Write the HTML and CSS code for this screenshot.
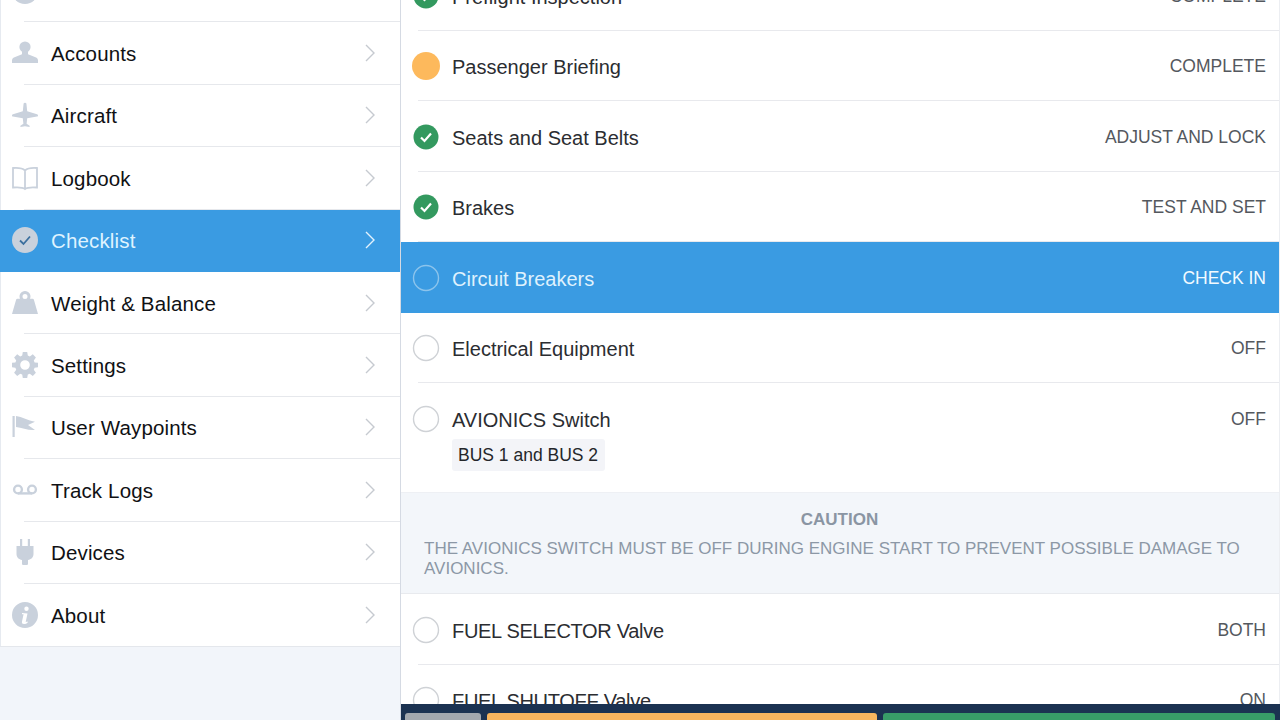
FILE: index.html
```html
<!DOCTYPE html>
<html lang="en">
<head>
<meta charset="utf-8">
<title>Checklist</title>
<link rel="stylesheet" href="styles.css">
</head>
<body>
<div class="app">
  <nav class="sidebar">
    <ul class="menu">
      <li class="menu-row">
        <svg class="menu-icon" viewBox="0 0 26 26"><circle cx="13" cy="13" r="13"/></svg>
      </li>
      <li class="menu-row">
        <svg class="menu-icon" viewBox="0 0 26 26"><circle cx="13" cy="7" r="5.6"/><path d="M10 11h6v3.2l7.5 3c1.6.7 2.5 1.7 2.5 3.3V23H0v-2.5c0-1.6.9-2.6 2.500-3.300l7.500-3z"/></svg>
        <span class="menu-label">Accounts</span>
        <svg class="chevron" viewBox="0 0 10 18"><path d="M1 1l8 8-8 8"/></svg>
      </li>
      <li class="menu-row">
        <svg class="menu-icon" viewBox="0 0 26 26"><path d="M11.600 1.500c.4-1 2.400-1 2.800 0l.8 7.800L25 12.200c.8.300 1 .7 1 1.300s-.2.900-1 1.100l-9.800 1.600-.6 5.500 3 2v1.300l-4.600-.8-4.600.8v-1.300l3-2-.6-5.500L.9 14.600c-.7-.2-.9-.5-.9-1.100s.2-1 1-1.300l9.800-2.900z"/></svg>
        <span class="menu-label">Aircraft</span>
        <svg class="chevron" viewBox="0 0 10 18"><path d="M1 1l8 8-8 8"/></svg>
      </li>
      <li class="menu-row">
        <svg class="menu-icon icon-outline" viewBox="0 0 26 26"><path d="M13 5.500C11 3.600 6 2.600 1 3v19.500c5-.4 10 0 12 1.500 2-1.500 7-1.900 12-1.500V3c-5-.4-10 .6-12 2.500zM13 5.500V24"/></svg>
        <span class="menu-label">Logbook</span>
        <svg class="chevron" viewBox="0 0 10 18"><path d="M1 1l8 8-8 8"/></svg>
      </li>
      <li class="menu-row is-active">
        <svg class="menu-icon" viewBox="0 0 26 26"><circle cx="13" cy="13" r="13"/><path class="inner-check" d="M8 13.500l3.500 3.500L18 9.500"/></svg>
        <span class="menu-label">Checklist</span>
        <svg class="chevron" viewBox="0 0 10 18"><path d="M1 1l8 8-8 8"/></svg>
      </li>
      <li class="menu-row">
        <svg class="menu-icon" viewBox="0 0 26 26"><path fill-rule="evenodd" d="M13 1a5.500 5.500 0 0 1 5 7.800h2.600c.7 0 1.100.3 1.300 1L26 24H0L4.100 9.800c.2-.7.600-1 1.300-1H8A5.500 5.500 0 0 1 13 1zm0 3a2.500 2.500 0 1 0 0 5 2.500 2.500 0 0 0 0-5z"/></svg>
        <span class="menu-label">Weight &amp; Balance</span>
        <svg class="chevron" viewBox="0 0 10 18"><path d="M1 1l8 8-8 8"/></svg>
      </li>
      <li class="menu-row">
        <svg class="menu-icon" viewBox="0 0 26 26"><path fill-rule="evenodd" d="M10.800 0h4.400l.6 3.600 2 .8 3-2.100 3.100 3.100-2.100 3 .8 2 3.400.4v4.400l-3.400.6-.8 2 2.100 3-3.100 3.100-3-2.100-2 .8-.6 3.400h-4.400l-.6-3.400-2-.8-3 2.100-3.100-3.100 2.100-3-.8-2L0 15.200v-4.400l3.400-.4.800-2-2.100-3 3.100-3.100 3 2.100 2-.8zM13 8.200a4.800 4.800 0 1 0 0 9.600 4.800 4.800 0 0 0 0-9.600z"/></svg>
        <span class="menu-label">Settings</span>
        <svg class="chevron" viewBox="0 0 10 18"><path d="M1 1l8 8-8 8"/></svg>
      </li>
      <li class="menu-row">
        <svg class="menu-icon" viewBox="0 0 26 26"><path d="M.5 2h2.200v21H.5zM4 2c6 .8 12 4.500 19 5.700L16 11l7 5c-7 .6-13-2.400-19-3z"/></svg>
        <span class="menu-label">User Waypoints</span>
        <svg class="chevron" viewBox="0 0 10 18"><path d="M1 1l8 8-8 8"/></svg>
      </li>
      <li class="menu-row">
        <svg class="menu-icon icon-outline icon-thick" viewBox="0 0 26 26"><circle cx="6" cy="12.500" r="3.900"/><circle cx="20" cy="12.500" r="3.900"/><path d="M6 16.400h14"/></svg>
        <span class="menu-label">Track Logs</span>
        <svg class="chevron" viewBox="0 0 10 18"><path d="M1 1l8 8-8 8"/></svg>
      </li>
      <li class="menu-row">
        <svg class="menu-icon" viewBox="0 0 26 26"><path d="M8 0h2.200v7H15.800V0H18v7h3.500v8c0 3.500-2.500 5.500-5.500 6v3.500c0 1-.6 1.500-1.500 1.500h-3c-.9 0-1.500-.5-1.500-1.500V21c-3-.5-5.500-2.500-5.500-6V7H8z"/></svg>
        <span class="menu-label">Devices</span>
        <svg class="chevron" viewBox="0 0 10 18"><path d="M1 1l8 8-8 8"/></svg>
      </li>
      <li class="menu-row">
        <svg class="menu-icon" viewBox="0 0 26 26"><path fill-rule="evenodd" d="M13 0a13 13 0 1 1 0 26 13 13 0 0 1 0-26zm1.500 4.500a2.200 2.200 0 1 0 0 4.400 2.200 2.200 0 0 0 0-4.400zM10 11v1.300h1.600L10 19.500c-.4 1.800.5 2.500 2 2.500 1.400 0 2.700-.5 3.700-1.500v-1.100l-2 .6 1.800-8.500z"/></svg>
        <span class="menu-label">About</span>
        <svg class="chevron" viewBox="0 0 10 18"><path d="M1 1l8 8-8 8"/></svg>
      </li>
    </ul>
  </nav>
  <main class="main">
    <div class="list">
      <div class="item">
        <svg class="status" viewBox="0 0 26 26"><circle class="done" cx="13" cy="13" r="12.500"/><path class="tick" d="M8 13.500l3.500 3.500L18 9.500"/></svg>
        <span class="item-label">Preflight Inspection</span>
        <span class="item-value">COMPLETE</span>
      </div>
      <div class="item">
        <svg class="status" viewBox="0 0 26 26"><circle class="current" cx="13" cy="13" r="14"/></svg>
        <span class="item-label">Passenger Briefing</span>
        <span class="item-value">COMPLETE</span>
      </div>
      <div class="item">
        <svg class="status" viewBox="0 0 26 26"><circle class="done" cx="13" cy="13" r="12.500"/><path class="tick" d="M8 13.500l3.500 3.500L18 9.500"/></svg>
        <span class="item-label">Seats and Seat Belts</span>
        <span class="item-value">ADJUST AND LOCK</span>
      </div>
      <div class="item">
        <svg class="status" viewBox="0 0 26 26"><circle class="done" cx="13" cy="13" r="12.500"/><path class="tick" d="M8 13.500l3.500 3.500L18 9.500"/></svg>
        <span class="item-label">Brakes</span>
        <span class="item-value">TEST AND SET</span>
      </div>
      <div class="item is-selected">
        <svg class="status" viewBox="0 0 26 26"><circle class="empty" cx="13" cy="13" r="12.500"/></svg>
        <span class="item-label">Circuit Breakers</span>
        <span class="item-value">CHECK IN</span>
      </div>
      <div class="item">
        <svg class="status" viewBox="0 0 26 26"><circle class="empty" cx="13" cy="13" r="12.500"/></svg>
        <span class="item-label">Electrical Equipment</span>
        <span class="item-value">OFF</span>
      </div>
      <div class="item item-tall">
        <svg class="status" viewBox="0 0 26 26"><circle class="empty" cx="13" cy="13" r="12.500"/></svg>
        <div class="item-stack">
          <span class="item-label">AVIONICS Switch</span>
          <span class="chip">BUS 1 and BUS 2</span>
        </div>
        <span class="item-value">OFF</span>
      </div>
      <section class="caution">
        <h2 class="caution-title">CAUTION</h2>
        <p class="caution-text">THE AVIONICS SWITCH MUST BE OFF DURING ENGINE START TO PREVENT POSSIBLE DAMAGE TO AVIONICS.</p>
      </section>
      <div class="item">
        <svg class="status" viewBox="0 0 26 26"><circle class="empty" cx="13" cy="13" r="12.500"/></svg>
        <span class="item-label label-caps">FUEL SELECTOR Valve</span>
        <span class="item-value">BOTH</span>
      </div>
      <div class="item">
        <svg class="status" viewBox="0 0 26 26"><circle class="empty" cx="13" cy="13" r="12.500"/></svg>
        <span class="item-label label-caps">FUEL SHUTOFF Valve</span>
        <span class="item-value">ON</span>
      </div>
    </div>
    <div class="actions">
      <div class="btn btn-gray"></div>
      <div class="btn btn-orange"></div>
      <div class="btn btn-green"></div>
    </div>
  </main>
</div>
</body>
</html>
```

FILE: styles.css
```css
* { box-sizing: border-box; }
html, body { margin: 0; height: 100%; overflow: hidden; }
body { font-family: "Liberation Sans", Arial, sans-serif; background: #fff; }

.app { display: flex; width: 1280px; height: 720px; overflow: hidden; }

/* Sidebar */
.sidebar {
  width: 401px;
  flex: none;
  background: #f2f5fa;
  border-right: 1px solid #d5dae3;
  overflow: hidden;
}
.menu { list-style: none; margin: -40px 0 0; padding: 0; background: #fff; border-bottom: 1px solid #e4e7ec; }
.menu-row {
  display: flex;
  align-items: center;
  height: 62.4px;
  padding: 0 25px 1px 11px;
  border-left: 1px solid #e6eaf0;
  background: linear-gradient(#e6e8ec, #e6e8ec) 23px 100% / 100% 1px no-repeat;
}
.menu-row:last-child { background: none; }
.menu-icon { width: 26px; height: 26px; flex: none; fill: #c9d1dc; }
.icon-outline { fill: none; stroke: #c9d1dc; stroke-width: 1.8; }
.icon-thick { stroke-width: 2.4; }
.menu-label { margin-left: 13px; padding-top: 2px; flex: 1; font-size: 20.5px; letter-spacing: .15px; color: #101114; }
.chevron { width: 10px; height: 18px; flex: none; margin-left: auto; fill: none; stroke: #c6cad0; stroke-width: 1.4; }
.is-active { background: #3a9be2; border-left-color: #3a9be2; }
.is-active .menu-label { color: #dff3ff; }
.is-active .chevron { stroke: #e2f2fd; }
.inner-check { fill: none; stroke: #3c6f9e; stroke-width: 1.8; }

/* Checklist */
.main { flex: 1; min-width: 0; display: flex; flex-direction: column; }
.list { flex: 1; min-height: 0; overflow: hidden; background: #fff; border-right: 1px solid #eceef2; }
.item {
  display: flex;
  align-items: center;
  height: 70.5px;
  padding: 0 13px 1px 12px;
  background: linear-gradient(#e8e9ed, #e8e9ed) 17px 100% / 100% 1px no-repeat;
}
.item:first-child { margin-top: -40px; }
.status { width: 26px; height: 26px; margin-top: 2px; flex: none; overflow: visible; }
.done { fill: #33995f; }
.current { fill: #fdb95c; }
.empty { fill: none; stroke: #cfd2d6; stroke-width: 1.4; }
.tick { fill: none; stroke: #fff; stroke-width: 2.2; }
.item-label { margin-left: 13px; padding-top: 5px; font-size: 20px; color: #2b2d31; }
.label-caps { letter-spacing: -.3px; }
.item-value { margin-left: auto; padding-top: 3px; font-size: 17.5px; color: #54585e; }
.is-selected { background: #3a9be2; }
.is-selected .item-label { color: #dff1fd; }
.is-selected .item-value { color: #f2faff; }
.is-selected .empty { stroke: #8cc4ec; }
.item-tall { height: 109px; padding: 21px 13px 0 12px; align-items: flex-start; background: none; }
.item-tall .item-value { padding-top: 5px; }
.item-stack { display: flex; flex-direction: column; align-items: flex-start; }
.chip { margin: 7px 0 0 13px; padding: 0 7px 0 6px; height: 32px; line-height: 32px; font-size: 17.5px; color: #24262a; background: #f3f4f8; border-radius: 3px; }

.caution {
  height: 102px;
  padding: 17px 24px 0 23px;
  background: #f3f6fa;
  border-top: 1px solid #eef0f4;
  border-bottom: 1px solid #e8eaee;
}
.caution-title { margin: 0; text-align: center; font-size: 17px; font-weight: bold; color: #8a95a3; line-height: 20px; }
.caution-text { margin: 9px 0 0; font-size: 17px; line-height: 20px; color: #8c98a6; }

/* Bottom bar */
.actions { flex: none; height: 16px; display: flex; gap: 6px; padding: 9px 5px 0 4px; background: #1b3251; overflow: hidden; }
.btn { height: 40px; border-radius: 3px; }
.btn-gray { width: 76px; background: #a3a8ae; }
.btn-orange { width: 390px; background: #f7b55e; }
.btn-green { flex: 1; background: #389c68; }
```
